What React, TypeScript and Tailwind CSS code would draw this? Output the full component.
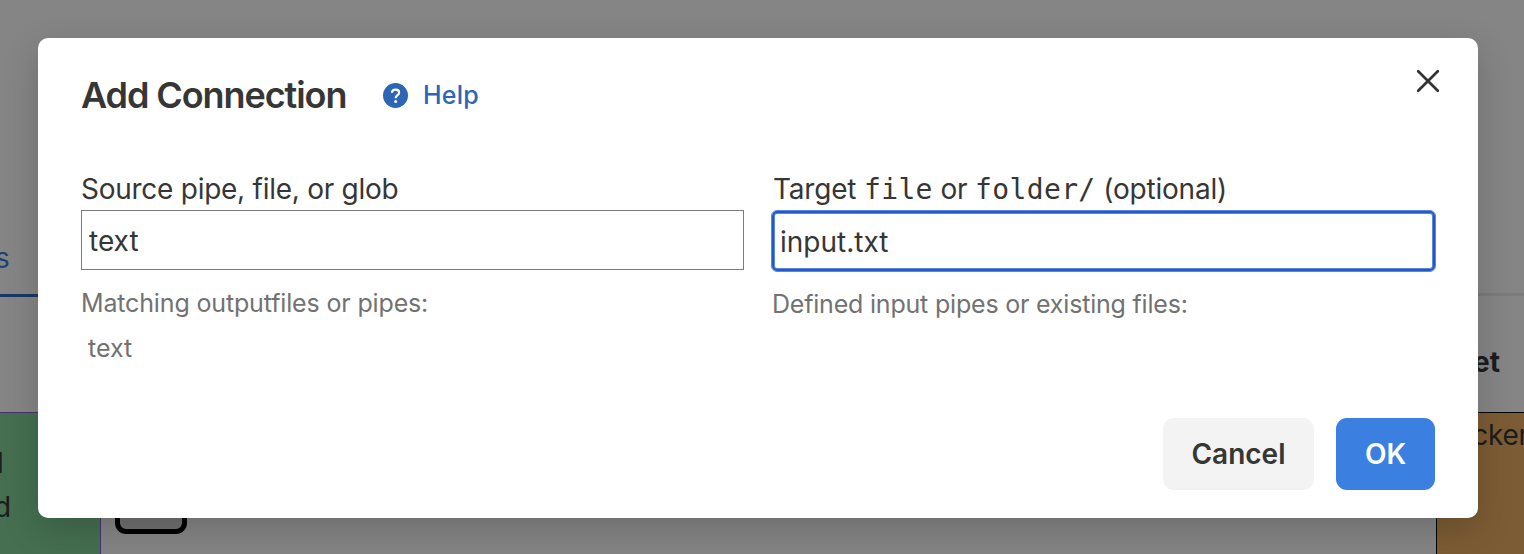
import React from "react";

function Backdrop() {
  return (
    <div className="flex h-full w-full flex-col bg-[#858585] text-[28px] text-[#1c1c1c]">
      <div className="flex h-[293px] items-end">
        <span className="-ml-[5px] pb-[17px] text-[28px] leading-[36px] text-[#1f4377]">s</span>
      </div>
      <div className="flex h-[4px] shrink-0 items-start">
        <div className="mt-px h-[3px] w-[80px] bg-[#1b3763]" />
        <div className="h-[3px] flex-1 bg-[#7b7b7b]" />
      </div>
      <div className="flex h-[115px] shrink-0 items-center justify-end pr-[24px] pt-[15px] font-bold">Target</div>
      <div className="flex flex-1">
        <div className="flex w-[101px] flex-col border-r border-t border-[#463276] bg-[#456f50] pt-[28px] leading-[44px]">
          <span className="-ml-[3px]">l</span>
          <span className="-ml-[6px]">d</span>
        </div>
        <div className="flex-1 pl-[14px] pt-[50px]">
          <div className="h-[72px] w-[72px] rounded-[11px] border-[5px] border-black bg-[#707070]" />
        </div>
        <div className="w-[88px] overflow-hidden whitespace-nowrap border-l border-t border-black bg-[#7c5c34] pl-[2px] leading-[44px] tracking-[-0.3px]">
          docker
        </div>
      </div>
    </div>
  );
}

function HelpIcon() {
  return (
    <svg className="h-[25px] w-[25px]" viewBox="0 0 25 25" fill="none">
      <circle cx="12.5" cy="12.5" r="12.5" fill="#2c66b4" />
      <path d="M9 9.8C9 7.6 10.6 6.6 12.6 6.6S16.1 7.7 16.1 9.7C16.1 12.3 12.7 12.2 12.7 15.2" stroke="#fff" strokeWidth="2.2" />
      <circle cx="12.7" cy="18.5" r="1.5" fill="#fff" />
    </svg>
  );
}

export default function App() {
  return (
    <div className="relative h-[554px] w-full overflow-hidden font-['Inter',sans-serif]">
      <Backdrop />
      <div className="absolute inset-0 px-[38px] pt-[38px]">
        <div
          role="dialog"
          className="flex h-[480px] w-[1440px] flex-col rounded-[10px] bg-white px-[43px] pb-[28px] text-[#363636] shadow-[0_12px_36px_rgba(0,0,0,0.18)]"
        >
          <div className="flex h-[114px] shrink-0 items-center">
            <h2 className="w-[302px] whitespace-nowrap text-[36px] font-semibold leading-[44px] tracking-[-1.08px]">Add Connection</h2>
            <a className="flex items-center gap-[15px] text-[25px] font-medium text-[#2c66b4]">
              <HelpIcon />
              <span className="-mb-[2px] tracking-[0.2px]">Help</span>
            </a>
            <button aria-label="Close" className="mb-[29px] -mr-[5px] ml-auto">
              <svg className="h-[24px] w-[24px]" viewBox="0 0 24 24" fill="none" stroke="#333" strokeWidth="2.7" strokeLinecap="round">
                <path d="M2.2 2.2L21.8 21.8M21.8 2.2L2.2 21.8" />
              </svg>
            </button>
          </div>

          <div className="flex gap-[28px] pt-[20px]">
            <div className="w-[663px] shrink-0">
              <label className="block h-[38px] whitespace-nowrap text-[28px] leading-[34px] tracking-[-0.26px]">Source pipe, file, or glob</label>
              <div className="flex h-[60px] items-center border border-[#7c7c7c] pl-[7px] pt-[2px] text-[28px]">text</div>
              <p className="mt-[15px] whitespace-nowrap text-[25px] leading-[36px] tracking-[-0.15px] text-[#727272]">Matching outputfiles or pipes:</p>
              <p className="mt-[9px] pl-[7px] text-[25px] leading-[36px] text-[#727272]">text</p>
            </div>
            <div className="w-[663px] shrink-0">
              <label className="block h-[38px] whitespace-nowrap pl-px text-[28px] leading-[34px] tracking-[-0.2px]">
                Target <code className="font-['DejaVu_Sans_Mono',monospace] text-[28px] tracking-[0.35px]">file</code> or{" "}
                <code className="font-['DejaVu_Sans_Mono',monospace] text-[28px] tracking-[0.35px]">folder/</code> (optional)
              </label>
              <div className="-ml-px flex h-[62px] w-[665px] items-center rounded-[6px] border border-[#5b88d9] pl-[8px] pt-[2px] text-[28px] shadow-[inset_0_0_0_2px_#235acb,inset_0_0_0_3px_#5b88d9]">input.txt</div>
              <p className="mt-[14px] whitespace-nowrap text-[25px] leading-[36px] tracking-[-0.2px] text-[#727272]">Defined input pipes or existing files:</p>
            </div>
          </div>

          <div className="mt-auto flex justify-end gap-[22px] text-[28px] font-semibold">
            <button className="h-[72px] w-[151px] rounded-[11px] bg-[#f3f3f3]">Cancel</button>
            <button className="h-[72px] w-[99px] rounded-[11px] bg-[#3b7fe0] text-white">OK</button>
          </div>
        </div>
      </div>
    </div>
  );
}
